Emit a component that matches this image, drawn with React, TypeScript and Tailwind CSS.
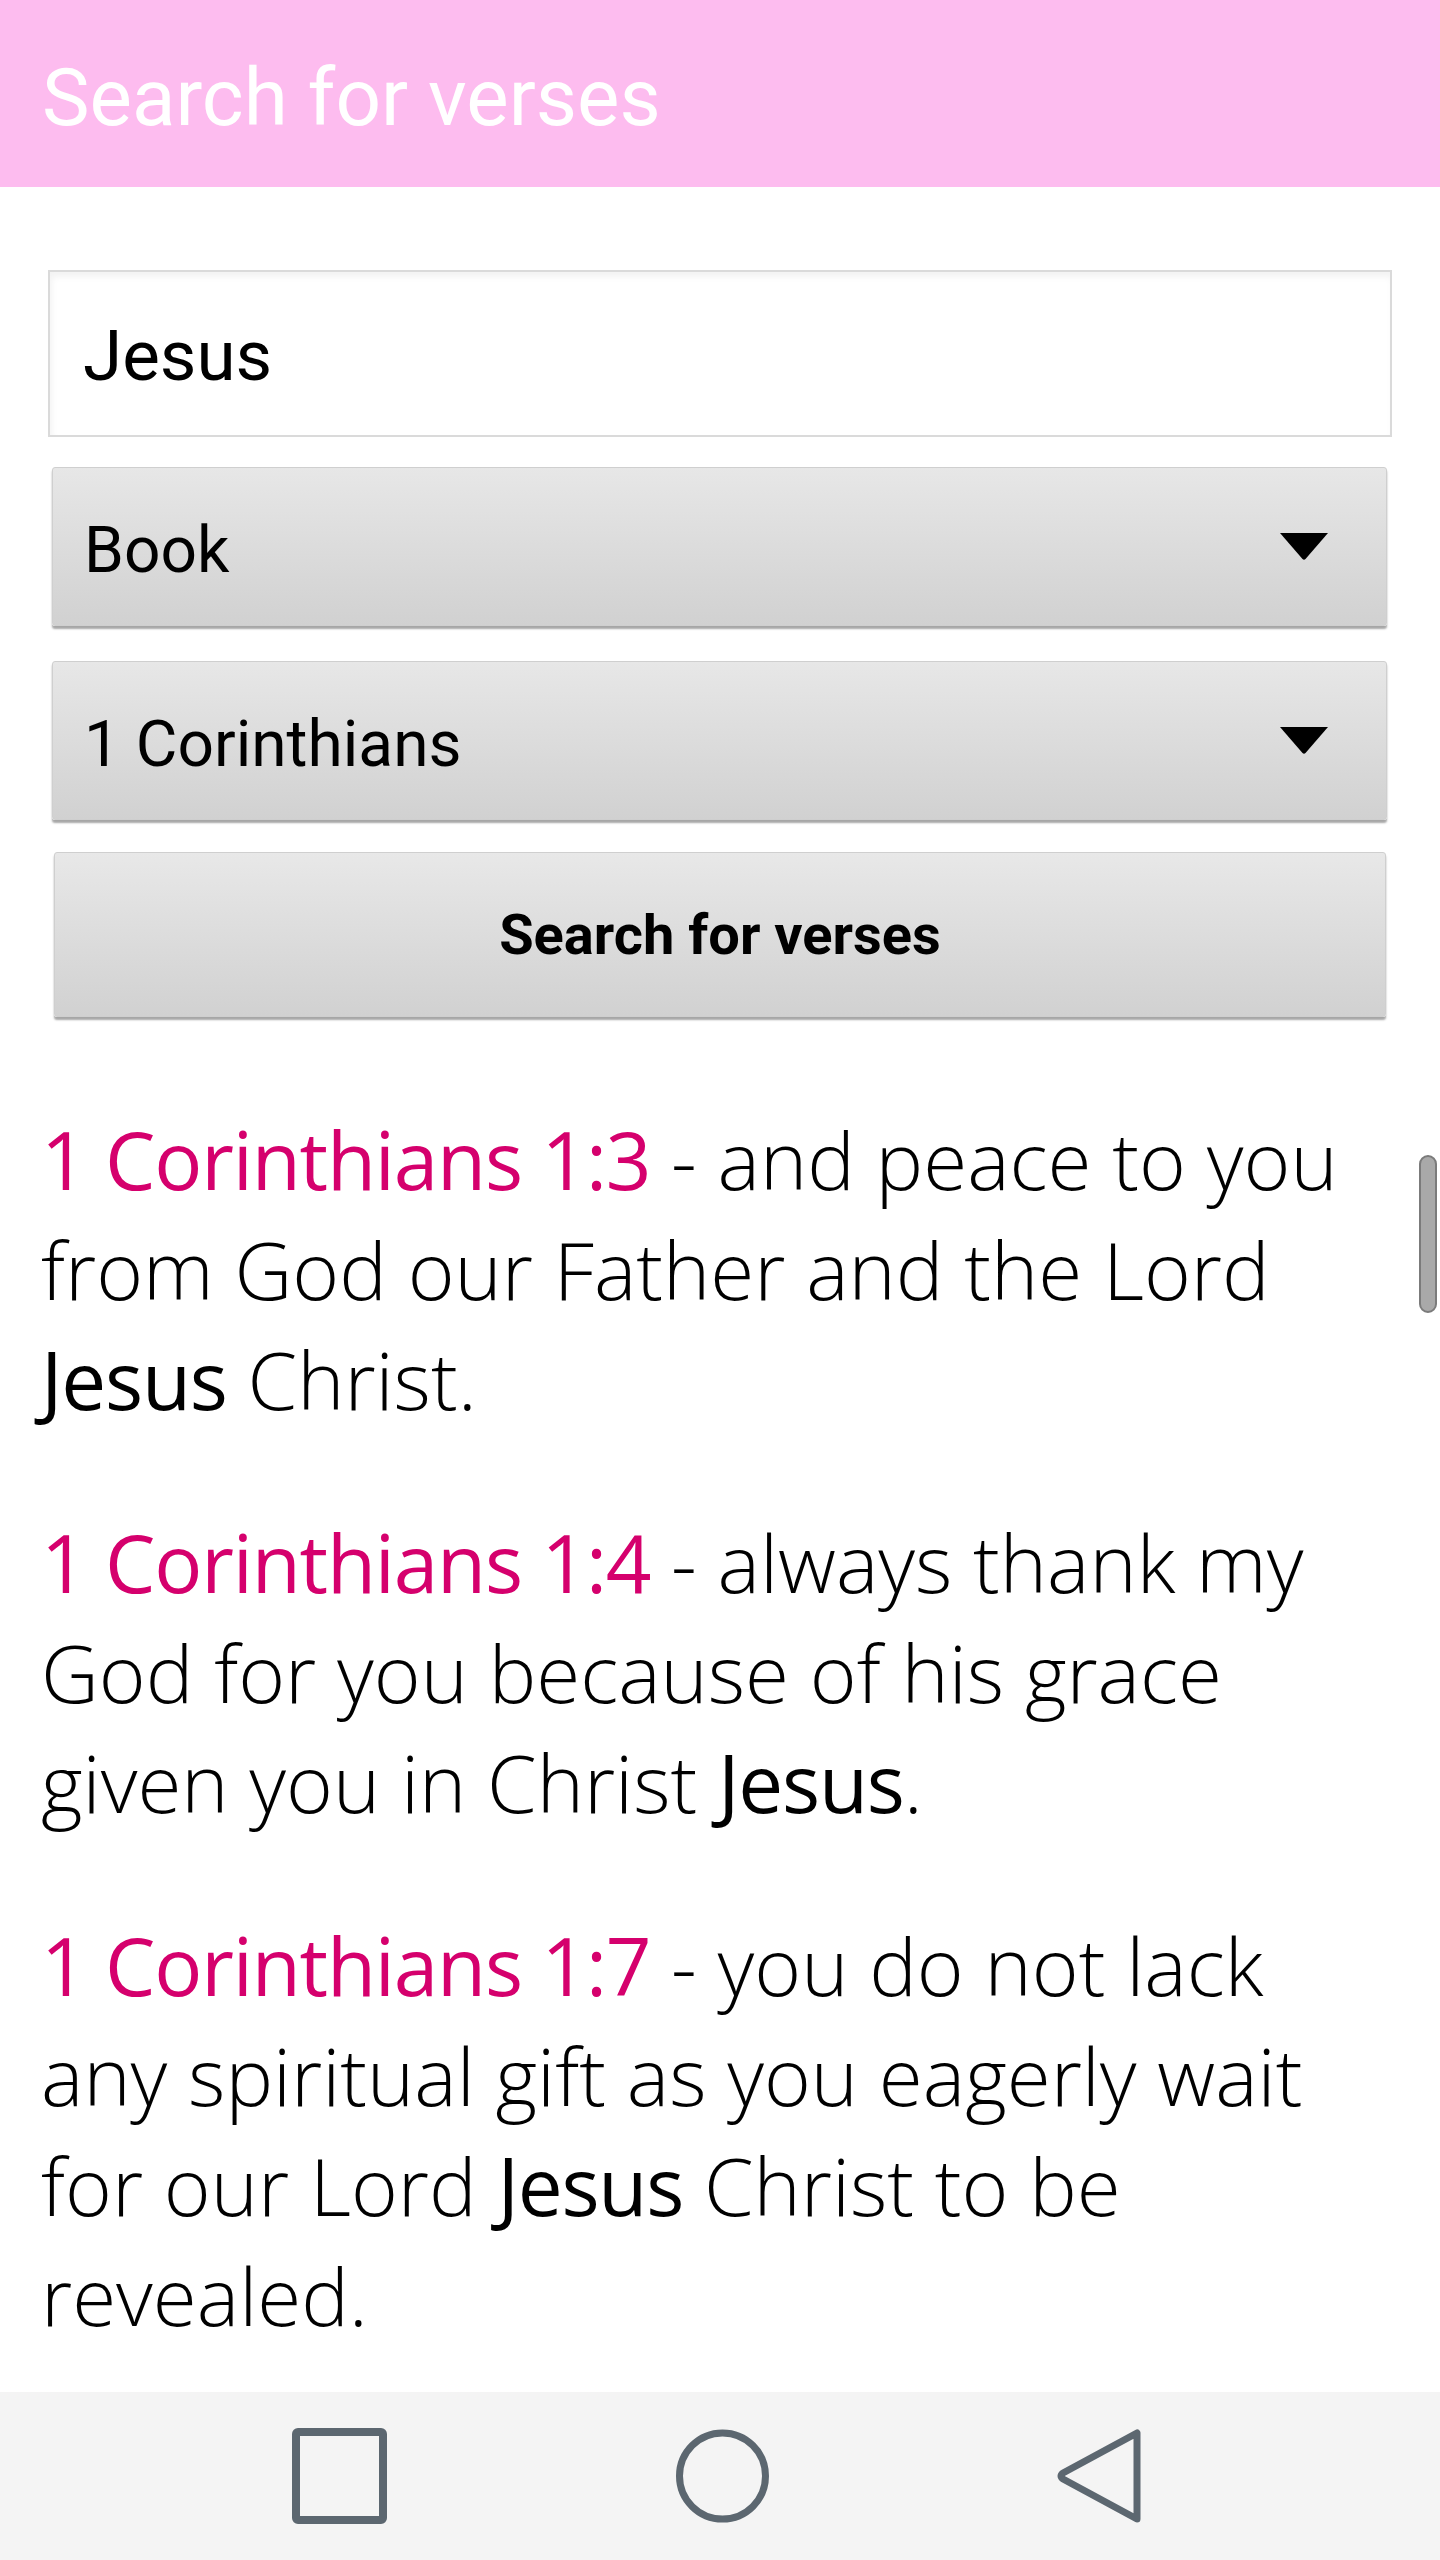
import React from 'react'

type Verse = {
  ref: string
  parts: (string | { b: string })[]
}

const VERSES: Verse[] = [
  {
    ref: '1 Corinthians 1:3',
    parts: [' - and peace to you from God our Father and the Lord ', { b: 'Jesus' }, ' Christ.']
  },
  {
    ref: '1 Corinthians 1:4',
    parts: [' - always thank my God for you because of his grace given you in Christ ', { b: 'Jesus' }, '.']
  },
  {
    ref: '1 Corinthians 1:7',
    parts: [' - you do not lack any spiritual gift as you eagerly wait for our Lord ', { b: 'Jesus' }, ' Christ to be revealed.']
  }
]

function Caret() {
  return (
    <svg width="48" height="27" viewBox="0 0 48 27" className="shrink-0">
      <path d="M0 0 H48 L25.5 26 Q24 27.5 22.5 26 Z" fill="#000" />
    </svg>
  )
}

function Spinner({ label }: { label: string }) {
  return (
    <div className="ml-[52px] mr-[53px] h-[159px] flex items-center justify-between pl-[31px] pr-[58px] rounded-[3px] border border-[#cfcfcf] bg-gradient-to-b from-[#e7e7e7] to-[#d1d1d1] shadow-[0_3px_2px_rgba(0,0,0,0.35)]">
      <span className="pt-[8px] text-[64px] leading-none text-black">{label}</span>
      <Caret />
    </div>
  )
}

export default function App() {
  return (
    <div className="relative w-[1440px] h-[2560px] flex flex-col bg-white overflow-hidden" style={{ fontFamily: 'Roboto, sans-serif' }}>
      {/* action bar */}
      <div className="h-[187px] shrink-0 bg-[#fdbcef] pl-[42px] pt-[58px]">
        <h1 className="text-[80px] leading-none text-white font-normal">Search for verses</h1>
      </div>

      {/* form */}
      <div className="pt-[83px] flex flex-col">
        <div className="mx-[48px] h-[167px] flex items-center pl-[33px] border-2 border-[#dadada] bg-white shadow-[inset_2px_5px_6px_rgba(0,0,0,0.05)]">
          <span className="pt-[3px] text-[71px] leading-none text-black">Jesus</span>
        </div>

        <div className="mt-[30px]">
          <Spinner label="Book" />
        </div>
        <div className="mt-[35px]">
          <Spinner label="1 Corinthians" />
        </div>

        <div className="mt-[32px] mx-[54px] h-[165px] flex items-center justify-center rounded-[3px] border border-[#cfcfcf] bg-gradient-to-b from-[#e8e8e8] to-[#d1d1d1] shadow-[0_3px_2px_rgba(0,0,0,0.35)]">
          <span className="text-[56px] leading-none font-bold text-black">Search for verses</span>
        </div>
      </div>

      {/* results */}
      <div className="pt-[87px] pl-[41px] pr-[60px] flex flex-col gap-[73px]" style={{ fontFamily: '"Open Sans", sans-serif' }}>
        {VERSES.map((v) => (
          <p key={v.ref} className="text-[80px] leading-[110px] font-light text-black">
            <span className="font-normal tracking-[-1.2px] text-[#d5006d]">{v.ref}</span>
            {v.parts.map((p, i) =>
              typeof p === 'string' ? (
                <React.Fragment key={i}>{p}</React.Fragment>
              ) : (
                <span key={i} className="font-normal tracking-[-1.2px]">
                  {p.b}
                </span>
              )
            )}
          </p>
        ))}
      </div>

      {/* scroll thumb */}
      <div className="absolute left-[1419px] top-[1155px] w-[18px] h-[158px] rounded-full bg-[#a9a9a9] border-2 border-[#7b7b7b]" />

      {/* nav bar */}
      <div className="mt-auto h-[168px] shrink-0 bg-[#f4f4f4] flex items-center">
        <div className="w-full flex items-center justify-between pl-[292px] pr-[298px]">
          <svg width="95" height="96" viewBox="0 0 95 96">
            <rect x="4" y="4" width="87" height="88" rx="2" fill="none" stroke="#5c6770" strokeWidth="8" />
          </svg>
          <svg width="95" height="96" viewBox="0 0 95 96">
            <circle cx="47.5" cy="48" r="43" fill="none" stroke="#5c6770" strokeWidth="7" />
          </svg>
          <svg width="85" height="96" viewBox="0 0 85 96">
            <path d="M80 5 V91 L6 51 Q2 48 6 45 Z" fill="none" stroke="#5c6770" strokeWidth="7" strokeLinejoin="round" />
          </svg>
        </div>
      </div>
    </div>
  )
}
